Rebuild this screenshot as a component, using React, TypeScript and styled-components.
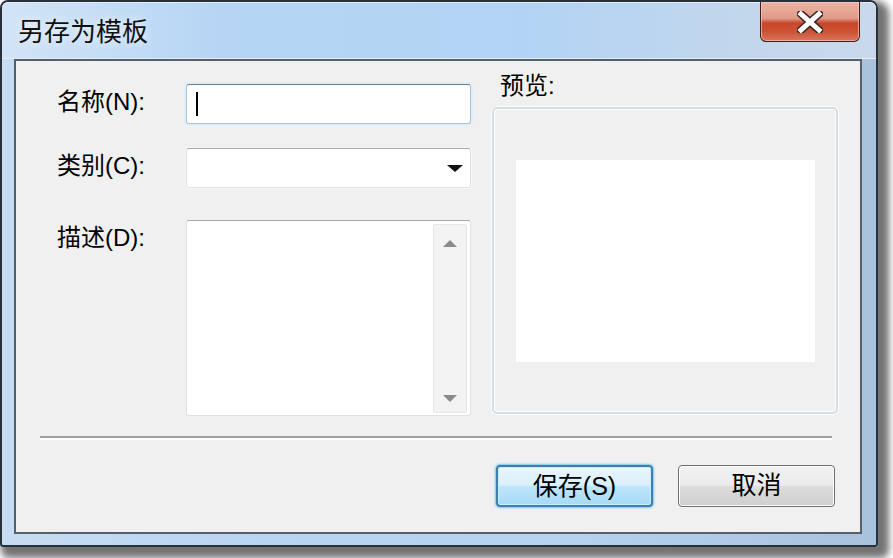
import React from "react";
import styled, { createGlobalStyle } from "styled-components";

const GlobalStyle = createGlobalStyle`
  html, body {
    margin: 0;
    padding: 0;
    background: #ffffff;
  }
  body {
    width: 893px;
    height: 558px;
    overflow: hidden;
    font-family: "Liberation Sans", "Noto Sans CJK SC", sans-serif;
  }
`;

const Page = styled.div`
  width: 893px;
  height: 558px;
  background: #ffffff;
`;

const Window = styled.div`
  width: 878px;
  height: 547px;
  box-sizing: border-box;
  border: 2px solid #26313b;
  border-radius: 8px 8px 3px 3px;
  background: linear-gradient(
    to right,
    #c6dcf2 0%,
    #b8d4f1 35%,
    #b6d2ef 65%,
    #a9c2de 100%
  );
  box-shadow: 6px 6px 7px 5px rgba(0, 0, 0, 0.55);
  display: flex;
  flex-direction: column;
`;

const TitleBar = styled.div`
  height: 57px;
  display: flex;
  align-items: flex-start;
  padding-left: 16px;
  box-sizing: border-box;
  border-top: 1px solid #e3eefa;
  border-radius: 6px 6px 0 0;
  background: linear-gradient(
    to right,
    #d2e4f6 0%,
    #b6d5f4 25%,
    #b2d3f4 60%,
    #c3d7ec 85%,
    #c8d9eb 100%
  );
  border-bottom: 1px solid #e2edf8;
`;

const Title = styled.div`
  align-self: center;
  margin-top: 3px;
  font-size: 26px;
  line-height: 30px;
  color: #111;
  text-shadow: 0 0 8px rgba(255, 255, 255, 0.9);
`;

const CloseButton = styled.div`
  margin-left: auto;
  margin-right: 16px;
  margin-top: -1px;
  width: 100px;
  height: 40px;
  box-sizing: border-box;
  border: 1px solid #3b201c;
  border-top: none;
  border-radius: 0 0 6px 6px;
  background: linear-gradient(
    to bottom,
    #ecb4a4 0%,
    #e09a88 42%,
    #c8462c 54%,
    #ca5232 75%,
    #d9765f 100%
  );
  box-shadow: inset 0 0 0 1px rgba(255, 210, 200, 0.6);
  display: flex;
  align-items: center;
  justify-content: center;
`;

const Client = styled.div`
  flex: 1;
  margin: 0 14px 11px 12px;
  border: 2px solid #56606b;
  background: #f0f0f0;
  display: flex;
  flex-direction: column;
`;

const MainRow = styled.div`
  display: flex;
  padding: 11px 0 0 41px;
`;

const Form = styled.div`
  margin-top: 12px;
  display: flex;
  flex-direction: column;
`;

const FormRow = styled.div<{ $gap?: number }>`
  display: flex;
  align-items: flex-start;
  margin-top: ${(p) => p.$gap ?? 0}px;
`;

const Label = styled.div`
  width: 129px;
  font-size: 24px;
  line-height: 35px;
  color: #000;
`;

const TextBox = styled.div<{ $focused?: boolean }>`
  width: 285px;
  box-sizing: border-box;
  height: 40px;
  background: #ffffff;
  border: 1px solid ${(p) => (p.$focused ? "#a7c3da" : "#dfe2e5")};
  border-top-color: ${(p) => (p.$focused ? "#64819a" : "#a9a9a9")};
  border-radius: 3px;
  box-shadow: ${(p) =>
    p.$focused ? "0 0 0 2px #e1eefa" : "0 0 0 1px #f7f7f7"};
  display: flex;
  align-items: center;
  padding: 0 7px 0 9px;
`;

const Caret = styled.span`
  width: 2px;
  height: 24px;
  background: #000;
`;

const DropArrow = styled.span`
  margin-left: auto;
  width: 0;
  height: 0;
  border-left: 8px solid transparent;
  border-right: 8px solid transparent;
  border-top: 7px solid #111;
`;

const MemoBox = styled.div`
  width: 285px;
  height: 196px;
  box-sizing: border-box;
  background: #ffffff;
  border: 1px solid #dfe2e5;
  border-top-color: #a9a9a9;
  border-radius: 3px;
  display: flex;
  justify-content: flex-end;
  padding: 3px 3px 2px 0;
`;

const ScrollBar = styled.div`
  width: 34px;
  box-sizing: border-box;
  background: #f3f3f3;
  border: 1px solid #e6e6e6;
  border-radius: 2px;
  display: flex;
  flex-direction: column;
  align-items: center;
  justify-content: space-between;
  padding: 15px 0 10px;
`;

const ScrollArrow = styled.span<{ $up?: boolean }>`
  width: 0;
  height: 0;
  border-left: 7px solid transparent;
  border-right: 7px solid transparent;
  ${(p) =>
    p.$up
      ? "border-bottom: 7px solid #8a8a8a;"
      : "border-top: 7px solid #8a8a8a;"}
`;

const PreviewColumn = styled.div`
  margin-left: 21px;
  width: 346px;
  display: flex;
  flex-direction: column;
`;

const PreviewLabel = styled.div`
  font-size: 24px;
  line-height: 28px;
  color: #000;
  margin: 0 0 7px 8px;
`;

const PreviewFrame = styled.div`
  height: 307px;
  box-sizing: border-box;
  border: 2px solid #d6dde2;
  border-radius: 5px;
  box-shadow: inset 0 0 0 1px #ffffff, 0 0 0 1px #ffffff;
  display: flex;
  align-items: center;
  justify-content: center;
`;

const PreviewCanvas = styled.div`
  width: 299px;
  height: 202px;
  background: #ffffff;
`;

const Separator = styled.div`
  margin: 20px 28px 0 24px;
  border-top: 2px solid #a0a0a0;
  border-bottom: 2px solid #ffffff;
`;

const ButtonRow = styled.div`
  display: flex;
  justify-content: flex-end;
  gap: 25px;
  padding: 25px 25px 0 0;
`;

const DialogButton = styled.div<{ $primary?: boolean }>`
  width: 157px;
  height: 42px;
  box-sizing: border-box;
  border-radius: 4px;
  font-size: 25px;
  line-height: 38px;
  text-align: center;
  color: #000;
  border: ${(p) => (p.$primary ? "2px solid #3d7fae" : "1px solid #707070")};
  background: ${(p) =>
    p.$primary
      ? "linear-gradient(to bottom, #eaf6fd 0%, #d9f0fc 48%, #bee6fd 52%, #a7d9f5 100%)"
      : "linear-gradient(to bottom, #f2f2f2 0%, #ebebeb 48%, #dddddd 52%, #cfcfcf 100%)"};
  box-shadow: ${(p) =>
    p.$primary
      ? "inset 0 0 0 1px #c8ecfc, 0 0 2px 1px #7fc4e8"
      : "inset 0 0 0 1px #fcfcfc"};
`;

const CloseGlyph = () => (
  <svg width="26" height="22" viewBox="0 0 26 22">
    <path
      d="M4 3 L22 19 M22 3 L4 19"
      stroke="#3a2522"
      strokeWidth="8"
      strokeLinecap="square"
    />
    <path
      d="M4 3 L22 19 M22 3 L4 19"
      stroke="#ffffff"
      strokeWidth="5"
      strokeLinecap="square"
    />
  </svg>
);

const App = () => {
  return (
    <Page>
      <GlobalStyle />
      <Window>
        <TitleBar>
          <Title>另存为模板</Title>
          <CloseButton>
            <CloseGlyph />
          </CloseButton>
        </TitleBar>
        <Client>
          <MainRow>
            <Form>
              <FormRow>
                <Label>名称(N):</Label>
                <TextBox $focused>
                  <Caret />
                </TextBox>
              </FormRow>
              <FormRow $gap={24}>
                <Label>类别(C):</Label>
                <TextBox>
                  <DropArrow />
                </TextBox>
              </FormRow>
              <FormRow $gap={32}>
                <Label>描述(D):</Label>
                <MemoBox>
                  <ScrollBar>
                    <ScrollArrow $up />
                    <ScrollArrow />
                  </ScrollBar>
                </MemoBox>
              </FormRow>
            </Form>
            <PreviewColumn>
              <PreviewLabel>预览:</PreviewLabel>
              <PreviewFrame>
                <PreviewCanvas />
              </PreviewFrame>
            </PreviewColumn>
          </MainRow>
          <Separator />
          <ButtonRow>
            <DialogButton $primary>保存(S)</DialogButton>
            <DialogButton>取消</DialogButton>
          </ButtonRow>
        </Client>
      </Window>
    </Page>
  );
};

export default App;
